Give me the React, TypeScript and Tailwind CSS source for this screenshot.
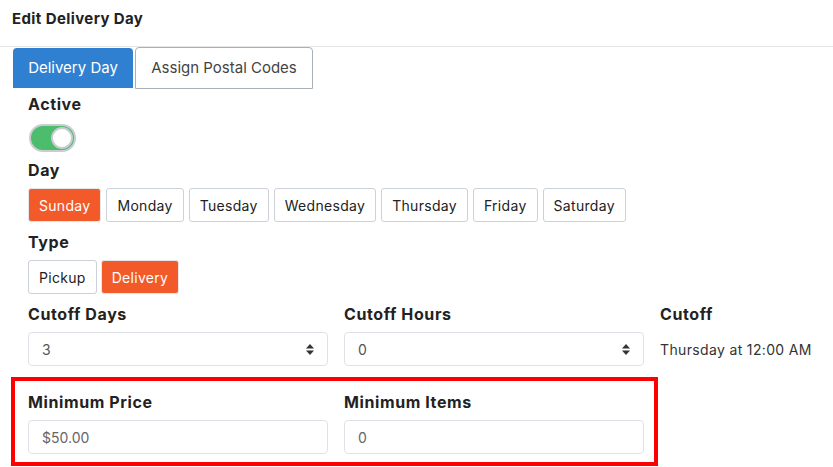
import React, { useState } from "react";

const DAYS = ["Sunday", "Monday", "Tuesday", "Wednesday", "Thursday", "Friday", "Saturday"];
const TYPES = ["Pickup", "Delivery"];

function Label({ children }: { children: React.ReactNode }) {
  return (
    <div className="h-[24px] text-[16px] leading-[24px] font-bold tracking-[0.6px] text-[#222]">{children}</div>
  );
}

function SortArrows() {
  return (
    <svg width="8" height="11" viewBox="0 0 8 11" className="text-[#333]">
      <path d="M4 0 L8 4.5 H0 Z" fill="currentColor" />
      <path d="M4 11 L8 6.5 H0 Z" fill="currentColor" />
    </svg>
  );
}

function SelectBox({ value }: { value: string }) {
  return (
    <div className="mt-[6px] flex h-[34px] w-[300px] items-center justify-between rounded-[4px] border border-[#dee2e6] bg-white pl-[13px] pr-[13px] text-[14px] text-[#555]">
      <span>{value}</span>
      <SortArrows />
    </div>
  );
}

function InputBox({ value }: { value: string }) {
  return (
    <div className="mt-[6px] flex h-[34px] w-[300px] items-center rounded-[4px] border border-[#dee2e6] bg-white pl-[13px] text-[14px] text-[#666]">
      {value}
    </div>
  );
}

export default function App() {
  const [active, setActive] = useState(true);
  const [day, setDay] = useState("Sunday");
  const [type, setType] = useState("Delivery");

  return (
    <div className="h-[467px] w-[833px] overflow-hidden bg-white font-['Inter',sans-serif] text-[#222]">
      {/* header */}
      <div className="flex h-[47px] items-start border-b border-[#e5e7eb] pl-[12px] pt-[8px]">
        <span className="text-[15px] font-bold leading-[22px] tracking-[0.4px] text-[#222]">Edit Delivery Day</span>
      </div>

      {/* tabs */}
      <div className="flex items-start pl-[13px]">
        <button className="mt-[1px] h-[40px] w-[120px] rounded-t-[4px] bg-[#2f80d1] text-[15px] text-white">
          Delivery Day
        </button>
        <button className="ml-[2px] h-[42px] w-[178px] rounded-t-[4px] border border-[#a9afb6] bg-white text-[15px] text-[#444]">
          Assign Postal Codes
        </button>
      </div>

      <div className="pl-[28px] pt-[3px]">
        <Label>Active</Label>
        <button
          onClick={() => setActive(!active)}
          className={`ml-[1px] mt-[8px] flex h-[28px] w-[47px] items-center rounded-full border-2 border-[#c9cdd1] px-[1px] ${
            active ? "justify-end bg-[#4cbc6d]" : "justify-start bg-[#e5e7eb]"
          }`}
        >
          <span className="h-[22px] w-[22px] rounded-full border-2 border-[#c9cdd1] bg-white" />
        </button>

        <div className="mt-[6px]">
          <Label>Day</Label>
          <div className="mt-[6px] flex gap-[5px]">
            {DAYS.map((d) => (
              <button
                key={d}
                onClick={() => setDay(d)}
                className={`h-[34px] rounded-[3px] border px-[10px] text-[14px] tracking-[0.3px] ${
                  day === d
                    ? "border-[#e5e7eb] bg-[#f25a29] text-white"
                    : "border-[#ccd1d8] bg-white text-[#222]"
                }`}
              >
                {d}
              </button>
            ))}
          </div>
        </div>

        <div className="mt-[8px]">
          <Label>Type</Label>
          <div className="mt-[6px] flex gap-[4px]">
            {TYPES.map((t) => (
              <button
                key={t}
                onClick={() => setType(t)}
                className={`h-[34px] rounded-[3px] border px-[10px] text-[14px] tracking-[0.3px] ${
                  type === t
                    ? "border-[#e5e7eb] bg-[#f25a29] text-white"
                    : "border-[#ccd1d8] bg-white text-[#222]"
                }`}
              >
                {t}
              </button>
            ))}
          </div>
        </div>

        <div className="mt-[8px] flex gap-[16px]">
          <div className="w-[300px]">
            <Label>Cutoff Days</Label>
            <SelectBox value="3" />
          </div>
          <div className="w-[300px]">
            <Label>Cutoff Hours</Label>
            <SelectBox value="0" />
          </div>
          <div>
            <Label>Cutoff</Label>
            <div className="mt-[6px] flex h-[34px] items-center text-[14px] tracking-[0.35px] text-[#333]">
              Thursday at 12:00 AM
            </div>
          </div>
        </div>

        <div className="relative mt-[24px] flex gap-[16px]">
          <div className="w-[300px]">
            <Label>Minimum Price</Label>
            <InputBox value="$50.00" />
          </div>
          <div className="w-[300px]">
            <Label>Minimum Items</Label>
            <InputBox value="0" />
          </div>
          {/* highlight frame around the minimums row */}
          <div className="pointer-events-none absolute -left-[17px] -top-[13px] h-[89px] w-[647px] border-4 border-[#ff0000]" />
        </div>
      </div>
    </div>
  );
}
